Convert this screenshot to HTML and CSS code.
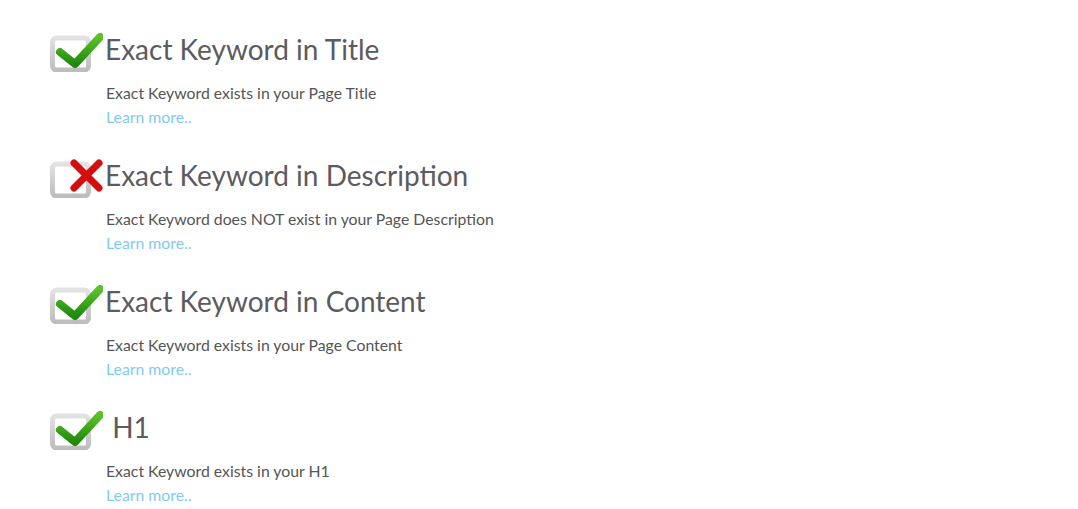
FILE: index.html
```html
<!DOCTYPE html>
<html>
<head>
<meta charset="utf-8">
<link rel="stylesheet" href="styles.css">
</head>
<body>
<svg width="0" height="0" class="defs">
  <defs>
    <linearGradient id="boxg" x1="0" y1="0" x2="0" y2="1">
      <stop offset="0" stop-color="#e2e2e2"/>
      <stop offset="1" stop-color="#bdbdbd"/>
    </linearGradient>
    <linearGradient id="chkg" x1="0" y1="0" x2="0" y2="1">
      <stop offset="0" stop-color="#5cc22a"/>
      <stop offset="1" stop-color="#1e8a0c"/>
    </linearGradient>
  </defs>
</svg>
<div class="list">
  <div class="item">
    <div class="head">
      <svg class="icon" width="56" height="46" viewBox="0 0 56 46">
        <rect x="5.5" y="12" width="36" height="32" rx="4" fill="#fff" stroke="url(#boxg)" stroke-width="5"/>
        <path d="M13 26 L28 38 L53 11" fill="none" stroke="url(#chkg)" stroke-width="8" stroke-linecap="round" stroke-linejoin="round"/>
      </svg>
      <h2 class="title">Exact Keyword in Title</h2>
    </div>
    <div class="body">
      <p class="desc">Exact Keyword exists in your Page Title</p>
      <a class="more" href="#">Learn more..</a>
    </div>
  </div>
  <div class="item">
    <div class="head">
      <svg class="icon" width="56" height="46" viewBox="0 0 56 46">
        <rect x="5.5" y="12" width="36" height="32" rx="4" fill="#fff" stroke="url(#boxg)" stroke-width="5"/>
        <path d="M27 11 L52 36 M52 11 L27 36" fill="none" stroke="#d60d0d" stroke-width="7" stroke-linecap="round"/>
      </svg>
      <h2 class="title">Exact Keyword in Description</h2>
    </div>
    <div class="body">
      <p class="desc">Exact Keyword does NOT exist in your Page Description</p>
      <a class="more" href="#">Learn more..</a>
    </div>
  </div>
  <div class="item">
    <div class="head">
      <svg class="icon" width="56" height="46" viewBox="0 0 56 46">
        <rect x="5.5" y="12" width="36" height="32" rx="4" fill="#fff" stroke="url(#boxg)" stroke-width="5"/>
        <path d="M13 26 L28 38 L53 11" fill="none" stroke="url(#chkg)" stroke-width="8" stroke-linecap="round" stroke-linejoin="round"/>
      </svg>
      <h2 class="title">Exact Keyword in Content</h2>
    </div>
    <div class="body">
      <p class="desc">Exact Keyword exists in your Page Content</p>
      <a class="more" href="#">Learn more..</a>
    </div>
  </div>
  <div class="item">
    <div class="head">
      <svg class="icon" width="56" height="46" viewBox="0 0 56 46">
        <rect x="5.5" y="12" width="36" height="32" rx="4" fill="#fff" stroke="url(#boxg)" stroke-width="5"/>
        <path d="M13 26 L28 38 L53 11" fill="none" stroke="url(#chkg)" stroke-width="8" stroke-linecap="round" stroke-linejoin="round"/>
      </svg>
      <h2 class="title">&nbsp;H1</h2>
    </div>
    <div class="body">
      <p class="desc">Exact Keyword exists in your H1</p>
      <a class="more" href="#">Learn more..</a>
    </div>
  </div>
</div>
</body>
</html>
```

FILE: styles.css
```css
html, body {
  margin: 0;
  padding: 0;
  background: #fff;
  font-family: Lato, "Liberation Sans", sans-serif;
}
.defs {
  position: absolute;
  width: 0;
  height: 0;
}
.list {
  padding: 26px 0 0 47px;
  display: flex;
  flex-direction: column;
  gap: 23px;
}
.head {
  display: flex;
  align-items: center;
  height: 46px;
}
.icon {
  flex: none;
  display: block;
  margin-right: 2px;
}
.title {
  margin: 0;
  font-size: 28px;
  font-weight: 400;
  color: #5b5b60;
  line-height: 34px;
  padding-bottom: 1px;
}
.body {
  padding-left: 59px;
  margin-top: 9px;
  display: flex;
  flex-direction: column;
}
.desc {
  margin: 0;
  font-size: 15.8px;
  line-height: 24px;
  color: #555;
}
.more {
  font-size: 15.8px;
  line-height: 24px;
  color: #80cbef;
  text-decoration: none;
}
```
